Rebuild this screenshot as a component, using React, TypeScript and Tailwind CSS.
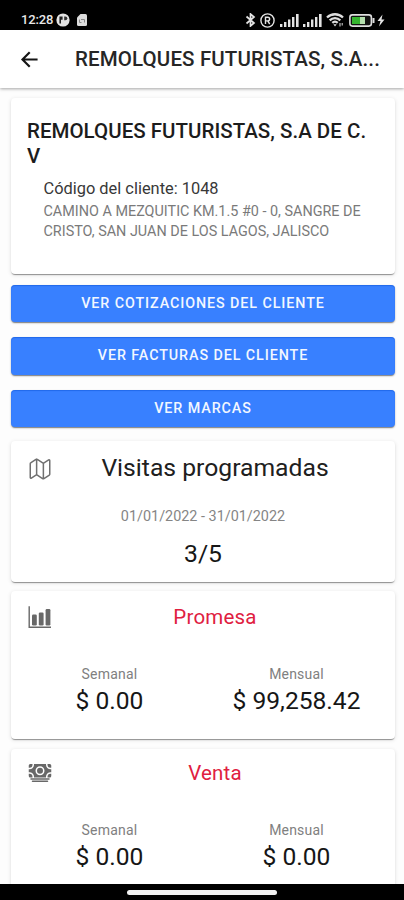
import type { ReactNode } from "react";
import { IoArrowBackSharp, IoMapOutline, IoCash } from "react-icons/io5";

const cardShadow =
  "rounded bg-white shadow-[0_2px_1px_-1px_rgba(0,0,0,0.28),0_1px_1px_0_rgba(0,0,0,0.14),0_1px_4px_0_rgba(0,0,0,0.12)]";

function Signal() {
  return (
    <svg width="19" height="13" viewBox="0 0 19 13" fill="#e4e4e4">
      <rect x="0" y="10" width="2.4" height="3" />
      <rect x="4" y="8" width="2.4" height="5" />
      <rect x="8" y="5.5" width="2.4" height="7.5" />
      <rect x="12" y="3" width="2.4" height="10" />
      <rect x="16" y="0" width="2.6" height="13" />
    </svg>
  );
}

function BarsIcon() {
  return (
    <svg className="size-6 shrink-0" viewBox="0 0 24 24" fill="currentColor">
      <path d="M1.200 1.200V22.300H23" fill="none" stroke="currentColor" strokeWidth="1.400" />
      <rect x="4" y="9.500" width="4.800" height="11" rx="1.200" />
      <rect x="10.800" y="7.500" width="4.800" height="13" rx="1.200" />
      <rect x="17.600" y="4" width="4.800" height="16.500" rx="1.200" />
    </svg>
  );
}

function StatusBar() {
  return (
    <div className="flex h-[30px] shrink-0 items-center bg-black pt-[10px] pl-[21px] text-[#e8e8e8]">
      <span className="w-[35px] text-[13px] leading-4 font-medium tracking-[-0.15px] whitespace-nowrap">12:28</span>
      <svg className="shrink-0" width="14" height="14" viewBox="0 0 14 14">
        <circle cx="7" cy="7" r="6.6" fill="#e4e4e4" />
        <path d="M3.4 3.600h3.200v3.200h-1.600v3.600h-1.600z" fill="#222" />
        <path d="M8.200 3.400h1.200a1.900 1.900 0 0 1 0 3.800h-1.200z" fill="#333" />
      </svg>
      <svg className="ml-[6px] shrink-0" width="12" height="14" viewBox="0 0 12 14">
        <path d="M4.500 1H9.500a1.500 1.500 0 0 1 1.500 1.500v9a1.500 1.500 0 0 1-1.500 1.500h-7A1.500 1.500 0 0 1 1 11.500V4.500z" fill="#dcdcdc" />
        <path d="M3.500 6.500v3h2M5 6.500h3.500v3" stroke="#888" fill="none" />
      </svg>
      <svg className="ml-[157px] shrink-0" width="11" height="14" viewBox="0 0 11 14" fill="none" stroke="#e4e4e4" strokeWidth="1.700">
        <path d="M1.500 3.500 9 10 5.500 13V1L9 4 1.500 10.500" />
      </svg>
      <svg className="ml-[4px] shrink-0" width="15" height="15" viewBox="0 0 15 15" fill="none" stroke="#e4e4e4">
        <circle cx="7.500" cy="7.500" r="6.600" strokeWidth="1.400" />
        <path d="M5.500 11V4.200h2.300a1.800 1.800 0 0 1 0 3.700H5.500M7.700 7.900 9.700 11" strokeWidth="1.400" />
      </svg>
      <div className="ml-[5px] shrink-0"><Signal /></div>
      <div className="ml-[3.500px] shrink-0"><Signal /></div>
      <svg className="ml-[4px] shrink-0" width="18" height="14" viewBox="0 0 18 14" fill="none" stroke="#dedede" strokeWidth="2.300">
        <path d="M1 4.500a11.500 11.500 0 0 1 16 0M3.700 7.400a7.500 7.500 0 0 1 10.600 0M6.300 9.900a4 4 0 0 1 5.400 0" />
        <path d="M7.300 11.200h3.400L9 13.500z" fill="#dedede" stroke="none" />
        <path d="M14 10v3.500M16.200 10v2.500" strokeWidth="1" />
      </svg>
      <svg className="ml-[5px] shrink-0" width="36" height="13" viewBox="0 0 36 13">
        <rect x="0.900" y="0.900" width="21.500" height="11.200" rx="2.500" fill="#111" stroke="#dedede" strokeWidth="1.600" />
        <rect x="3" y="3" width="8" height="7" fill="#35b52f" />
        <rect x="11" y="3" width="5" height="7" fill="#b5dfae" />
        <path d="M23.500 4h2v5h-2z" fill="#dedede" />
        <path d="M33.500 0.500 28.500 7h3l-1.500 5.500 5.500-7h-3z" fill="#e4e4e4" />
      </svg>
    </div>
  );
}

function ActionButton({ children }: { children: ReactNode }) {
  return (
    <button className="h-[37.500px] w-full rounded bg-[#3880ff] pb-[1.500px] text-[14.300px] leading-5 font-medium tracking-[0.920px] text-[#f2f7ff] shadow-[0_2px_1px_-1px_rgba(0,0,0,0.300),0_1px_2px_0_rgba(0,0,0,0.300),inset_0_1px_1px_rgba(20,90,220,0.600)]">
      {children}
    </button>
  );
}

function Amount({ label, value }: { label: string; value: string }) {
  return (
    <div className="flex w-[187px] flex-col items-center">
      <span className="h-5 text-sm leading-5 tracking-[0.200px] text-[#808080]">{label}</span>
      <span className="mt-px h-8 text-[24.600px] leading-8 text-[#161616]">{value}</span>
    </div>
  );
}

function MoneyCard({ icon, title, monthly, className }: { icon: ReactNode; title: string; monthly: string; className: string }) {
  return (
    <section className={`${cardShadow} ${className}`}>
      <div className="flex h-6 items-center pl-[17px] text-[#686868]">
        {icon}
        <h2 className="ml-[15px] w-[296px] text-center text-[20.500px] leading-6 font-normal tracking-[0.200px] text-[#e0203f]">{title}</h2>
      </div>
      <div className="mt-[35px] flex pl-[5px]">
        <Amount label="Semanal" value="$ 0.00" />
        <Amount label="Mensual" value={monthly} />
      </div>
    </section>
  );
}

export default function App() {
  return (
    <div className="flex h-[900px] w-[404px] flex-col overflow-hidden bg-[#fdfdfd] font-['Roboto',sans-serif]">
      <StatusBar />
      <header className="z-10 flex h-[58px] shrink-0 items-center bg-white pl-[18px] shadow-[0_1px_3px_rgba(0,0,0,0.350)]">
        <IoArrowBackSharp className="size-[23px] shrink-0 text-[#151515]" />
        <h1 className="ml-[34px] w-[320px] text-[20.500px] leading-6 font-medium tracking-[0.130px] whitespace-nowrap text-[#262626]">
          REMOLQUES FUTURISTAS, S.A...
        </h1>
      </header>

      <main className="flex min-h-0 flex-1 flex-col overflow-hidden pt-[10px] pr-[9px] pl-[11px]">
        <section className={`h-[176px] shrink-0 px-4 pt-[21px] ${cardShadow}`}>
          <h2 className="text-[20.500px] leading-[24.500px] font-medium tracking-[0.020px] whitespace-nowrap text-[#1c1c1c]">
            REMOLQUES FUTURISTAS, S.A DE C.
            <br />V
          </h2>
          <div className="mt-[11px] pl-[16.500px]">
            <p className="text-[16.400px] leading-5 text-[#383838]">Código del cliente: 1048</p>
            <p className="mt-[2.500px] text-[14.400px] leading-[20.500px] whitespace-nowrap text-[#7a7a7a]">
              CAMINO A MEZQUITIC KM.1.5 #0 - 0, SANGRE DE
              <br />
              CRISTO, SAN JUAN DE LOS LAGOS, JALISCO
            </p>
          </div>
        </section>

        <div className="mt-[10.500px] flex shrink-0 flex-col gap-[15.200px]">
          <ActionButton>VER COTIZACIONES DEL CLIENTE</ActionButton>
          <ActionButton>VER FACTURAS DEL CLIENTE</ActionButton>
          <ActionButton>VER MARCAS</ActionButton>
        </div>

        <section className={`mt-[14.100px] h-[141px] shrink-0 pt-[11px] ${cardShadow}`}>
          <div className="flex h-8 items-center pl-[17px]">
            <IoMapOutline className="mt-px size-6 text-[#707070]" />
            <h2 className="ml-[15px] w-[296px] text-center text-[24.700px] leading-8 font-normal text-[#202020]">Visitas programadas</h2>
          </div>
          <p className="mt-[23px] text-center text-[14.400px] leading-5 text-[#858585]">01/01/2022 - 31/01/2022</p>
          <p className="mt-[11px] text-center text-[24.700px] leading-8 text-[#161616]">3/5</p>
        </section>

        <MoneyCard icon={<BarsIcon />} title="Promesa" monthly="$ 99,258.42" className="mt-[8.700px] h-[148px] shrink-0 pt-[13.800px]" />
        <MoneyCard icon={<IoCash className="size-6" />} title="Venta" monthly="$ 0.00" className="mt-[10px] h-[148px] shrink-0 pt-[12px]" />
      </main>

      <footer className="z-10 flex h-4 shrink-0 justify-center bg-black pt-[6px]">
        <div className="h-[5px] w-[150px] rounded-full bg-[#f2f2f2]" />
      </footer>
    </div>
  );
}
